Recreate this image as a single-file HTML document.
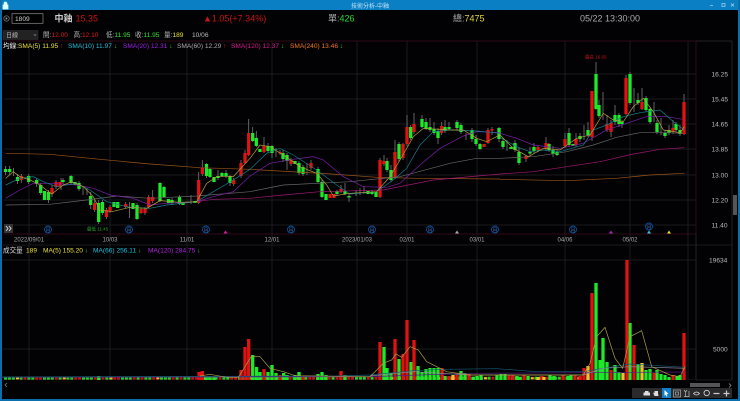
<!DOCTYPE html>
<html lang="zh-Hant"><head><meta charset="utf-8"><title>技術分析-中釉</title>
<style>
html,body{margin:0;padding:0;background:#000;width:740px;height:401px;overflow:hidden}
svg{display:block;filter:blur(.35px)}
text{font-family:"Liberation Sans","Noto Sans CJK TC",sans-serif;font-size:6.6px}
.l{fill:none;stroke-width:.7}
.l path,.l polyline{fill:none;vector-effect:non-scaling-stroke}
</style></head><body>
<svg width="740" height="401" viewBox="0 0 740 401" xmlns="http://www.w3.org/2000/svg">
<rect width="740" height="401" fill="#020204"/>
<rect width="740" height="10" fill="#0b7fc4"/>
<rect y="0" width="2" height="401" fill="#0b6fae"/>
<rect x="738" y="0" width="2" height="401" fill="#0b6fae"/>
<rect y="399" width="740" height="2" fill="#0b6fae"/>
<!-- title bar -->
<path d="M3 5h5v4H3zM4 5V3.500a1.500 1.500 0 0 1 3 0V5" fill="#dff" stroke="#dff" stroke-width=".7"/>
<text x="370" y="7.800" text-anchor="middle" fill="#bfe2f5" style="font-size:6px">技術分析-中釉</text>
<path d="M710 5.500h3M722 3.500h3v3h-3zM731 3.500l3 3m0-3l-3 3" stroke="#9fd0ec" stroke-width=".8" fill="none"/>
<!-- header -->
<circle cx="6.500" cy="18.500" r="2.700" fill="none" stroke="#999" stroke-width=".6"/><path d="M5.700 17v3l2-1.500z" fill="#999"/>
<rect x="12" y="13.700" width="31" height="9.600" fill="#000" stroke="#8a8a8a" stroke-width=".7"/>
<text x="15" y="21" fill="#ccc" style="font-size:6.600px">1809</text>
<text x="54.500" y="21.500" fill="#ccc" style="font-size:9px;font-weight:bold">中釉</text>
<text x="75.500" y="21.500" fill="#c81414" style="font-size:9px">15.35</text>
<text x="203" y="21.500" fill="#c81414" style="font-size:9px">▲1.05(+7.34%)</text>
<text x="328" y="21.500" fill="#aaa" style="font-size:9px">單:<tspan fill="#2cd82c">426</tspan></text>
<text x="453" y="21.500" fill="#aaa" style="font-size:9px">總:<tspan fill="#e0d830">7475</tspan></text>
<text x="580" y="21.500" fill="#aaa" style="font-size:9px">05/22 13:30:00</text>
<rect x="3" y="30.500" width="35" height="9" fill="#222" stroke="#333" stroke-width=".5"/>
<text x="6" y="37.500" fill="#bbb" style="font-size:6px">日線</text>
<path d="M33.500 34.500l1.500 1.500 1.500-1.500z" fill="#888"/>
<text x="43" y="37.200" fill="#bbb">開:<tspan fill="#e01818">12.00</tspan></text>
<text x="73.500" y="37.200" fill="#bbb">高:<tspan fill="#e01818">12.10</tspan></text>
<text x="106" y="37.200" fill="#bbb">低:<tspan fill="#30e030">11.95</tspan></text>
<text x="135" y="37.200" fill="#bbb">收:<tspan fill="#30e030">11.95</tspan></text>
<text x="164" y="37.200" fill="#bbb">量:<tspan fill="#e8e030">189</tspan></text>
<text x="192" y="37.200" fill="#bbb">10/06</text>
<!-- grid -->
<g stroke="#222226" stroke-width=".8" fill="none">
<path d="M4 74H696M4 99H696M4 124H696M4 149H696M4 175H696M4 200H696M4 225H696"/>
<path d="M29 41V380M110 41V380M187 41V380M272 41V380M357 41V380M407 41V380M477 41V380M565 41V380M630 41V380M688 41V380"/>
<path d="M3 245H732M3 260H696M3 349H696M3 380H732"/>
<path d="M732 41V380" stroke="#2c2c30"/>
</g>
<path d="M3 41H696M3 234H696M696 41V234" stroke="#3c0e1a" stroke-width=".8" fill="none"/>
<path d="M696 41H732M696 234V380" stroke="#2c2c30" stroke-width=".8" fill="none"/>
<!-- legend -->
<text x="3" y="48" fill="#eee">均線:<tspan fill="#e8e030">SMA(5) 11.95 </tspan><tspan fill="#e02020">↑</tspan></text>
<text x="68" y="48" fill="#18c0d8">SMA(10) 11.97 <tspan fill="#28c828">↓</tspan></text>
<text x="123" y="48" fill="#9a20e0">SMA(20) 12.31 <tspan fill="#28c828">↓</tspan></text>
<text x="177" y="48" fill="#aaa">SMA(60) 12.29 <tspan fill="#e02020">↑</tspan></text>
<text x="231" y="48" fill="#d81890">SMA(120) 12.37 <tspan fill="#28c828">↓</tspan></text>
<text x="290" y="48" fill="#f07818">SMA(240) 13.46 <tspan fill="#28c828">↓</tspan></text>
<!-- right scale -->
<g fill="#bbb">
<text x="711.500" y="76.500">16.25</text><text x="711.500" y="101.500">15.45</text><text x="711.500" y="126.500">14.65</text><text x="711.500" y="151.500">13.85</text><text x="711.500" y="177.500">13.00</text><text x="711.500" y="202.500">12.20</text><text x="711.500" y="227.500">11.40</text>
<text x="709" y="262.500">19634</text><text x="713" y="351.500">5000</text>
</g>
<rect x="733" y="195" width="4" height="20" fill="#555"/>
<!-- date labels -->
<g fill="#aaa" text-anchor="middle">
<text x="29" y="241.500" style="font-size:6px">2022/09/01</text><text x="110" y="241.500" style="font-size:6px">10/03</text><text x="187" y="241.500" style="font-size:6px">11/01</text><text x="272" y="241.500" style="font-size:6px">12/01</text><text x="357" y="241.500" style="font-size:6px">2023/01/03</text><text x="407" y="241.500" style="font-size:6px">02/01</text><text x="477" y="241.500" style="font-size:6px">03/01</text><text x="565" y="241.500" style="font-size:6px">04/06</text><text x="630" y="241.500" style="font-size:6px">05/02</text>
</g>
<!-- wicks -->
<path stroke="#7a7a7a" stroke-width=".8" fill="none" d="M5.500 166V175M9.700 166V175M13.500 168V176M17.500 174V184M21.300 174V183M28.700 174V184M36.700 178V187M40.700 183V195M48.500 190V203M52 185V197M56 180V189M61 178V190M63 178V184M71 175V185M79 181V191M83 186V195M87 188V195M90.700 192V209M94.700 200V212M98.700 200V224M102.500 200V215M106.500 208V219M110 205V213M125.700 202V208M129.500 202V218M137 203V220M141 208V214M145 207V215M148.700 195V208M152.700 190V203M160 182V202M164 186V198M172 198V205M179.500 195V205M191 195V204M198.700 172V204M202.300 160V176M206.500 163V178M210 168V178M218 170V180M222 172V177M226 170V178M230 175V186M233.700 178V186M241 160V178M245 150V164M248.700 119V156M252.700 127V142M256.300 131V147M264 137V153M268 143V153M272 145V158M276 148V157M280 150V155M283 150V162M287 153V170M291 158V166M299 161V175M303 165V176M307 163V175M311 160V170M318 167V183M322 180V198M337 190V196M341 185V193M345 183V195M349 194V202M356 190V196M360 188V195M364 186V194M372 190V195M380 158V198M384 155V166M387 158V172M391 165V182M395 140V179M399 142V162M403 143V160M407 115V146M410.700 125V140M414 113V134M422 115V128M426 118V130M430 118V132M434 122V135M438 128V144M441.700 122V135M445 120V133M449 122V130M457 120V130M461 123V134M466 133V140M472 128V142M476 135V146M480 143V150M488 128V144M492 127V135M499 127V142M503 138V149M507 140V151M515 140V152M519 148V165M526 155V162M530 147V155M534 143V153M538 146V152M546 137V151M549 143V152M553 146V157M557 150V156M565 133V148M569 128V147M576 133V147M580 133V142M584 125V140M588 122V137M592 91V141M596 62V110M599 100V118M603 92V120M607 115V132M611 120V137M615 105V125M619 113V127M622 120V128M626 75V115M630 72V105M634 88V112M638 93V105M642 88V110M646 96V112M650 107V124M654 102V122M657 120V134M661 118V135M665 130V138M669 125V135M673 120V134M676 122V132M680 125V136M684 94V135"/>
<!-- green candles -->
<path stroke="#1ee82a" stroke-width="3.300" fill="none" d="M5.500 169V172M9.700 169V172M17.500 177V181M28.700 176V182M36.700 180V184M40.700 185V193M44.500 191V200M48.500 192V200M63 180V182M71 176V183M75 182V185M79 183V189M90.700 196V205M98.700 203V222M102.500 202V213M114 202V207M117.700 202V208M133 203V209M137 205V219M160 183V201M164 187V197M168.500 199V203M172 200V203M179.500 197V204M183 202V205M195 201V203M206.500 164V176M210 169V177M214 177V182M218 176V178M222 173V176M226 173V176M230 176V183M252.700 133V141M256.300 138V146M260 149V152M268 146V151M272 146V153M283 153V159M287 155V161M295 161V164M299 163V173M303 167V174M318 169V182M322 182V197M326 194V200M337 191V194M345 191V194M349 196V197.500M368 191V194M372 192V194M376 192V197M387 161V170M391 170V180M399 144V159M410.700 127V138M422 119V127M426 122V129M430 127V130M434 129V133M438 131V138M445 127V131M449 127V129M457 122V128M461 125V132M472 130V139M476 139V144M480 144V149M499 128V139M503 141V147M511 147V149M515 143V150M519 152V163M530 152V153.500M534 147V151M549 144V150M553 150V154M557 152V155M569 133V145M573 144V146M580 136V139M588 130V135M596 74V109M599 105V116M615 115V122M619 115V124M622 122V124M630 74V103M638 100V103M646 98V110M650 109V122M657 123V132M665 133V136M669 130V133M676 124V130M680 130V134"/>
<!-- red candles -->
<path stroke="#e01212" stroke-width="3.300" fill="none" d="M21.300 176V180M52 188V194M56 182V187M60 182V187M94.700 203V210M106.500 210V217M110 207V211M125.700 204V207M141 209V213M145 209V213M148.700 197V207M152.700 197V201M198.700 180V203M202.300 168V174M233.700 180V184M241 163V176M245 153V163M248.700 133V155M264 146V152M280 152V153.500M291 160V164M311 163V168M330 194V198M334 194V198M341 189V192M380 160V197M384 161V164M395 152V178M403 144V158M407 127V144M414 124V132M441.700 126V133M484 144V147M488 130V143M492 129V130.500M526 156V159M538 147V150M546 143V149M565 139V146M576 139V145M592 91V137M607 124V130M611 123V132M626 78V114M642 102V109M673 128V132M684 102V134"/>
<!-- peak labels -->
<text x="585" y="58.500" fill="#c01414" style="font-size:4.500px">最高 16.65</text>
<text x="87" y="230.500" fill="#22a822" style="font-size:4.500px">最低 11.45</text>
<!-- price MAs : zoom coords -->
<g class="l">
<g transform="translate(0,70) scale(.33333)">
<polyline stroke="#9c5418" points="17,250 150,253 300,268 450,282 600,293 750,298 996,312 1130,322 1250,325 1500,327"/>
<polyline stroke="#a01870" points="540,400 590,395 640,388 750,385 850,375 960,365 1150,360 1300,330 1500,312"/>
<polyline stroke="#666" points="17,405 150,403 260,390 350,378 450,385 590,378 750,365 850,345 1050,335 1200,320 1350,280 1430,265 1500,265"/>
<polyline stroke="#7a1fa8" points="17,385 60,360 100,340 150,340 230,345 280,355 330,375 400,385 450,405 500,400 590,395 640,380 700,365 750,318 810,280 880,268 940,260 970,270 1030,320 1090,350 1160,352 1200,340 1260,285 1320,235 1390,198 1430,185 1500,188"/>
<polyline stroke="#157f90" points="17,345 60,325 100,320 130,335 170,350 230,340 270,360 320,395 390,412 450,415 500,405 590,395 640,365 700,330 750,298 800,250 840,235 880,255 950,300 1010,345 1050,372 1130,365 1180,330 1220,295 1260,225 1300,185 1350,180 1430,183 1500,190"/>
<polyline stroke="#b8a040" points="17,325 40,305 60,320 90,330 120,345 155,372 190,345 215,335 250,350 280,380 300,420 335,425 390,412 440,415 480,392 540,397 590,395 620,340 650,320 700,320 750,265 780,225 810,230 850,255 900,290 950,310 980,345 1000,378 1050,370 1130,365 1170,320 1200,270 1240,200 1270,175 1350,180 1390,180 1430,205 1460,215 1500,195"/>
</g>
<g transform="translate(500,50) scale(.33333)">
<polyline stroke="#9c5418" points="0,388 200,392 350,385 450,375 553,370"/>
<polyline stroke="#a01870" points="0,372 100,365 200,350 300,335 400,312 480,298 553,293"/>
<polyline stroke="#666" points="0,325 100,320 200,305 280,285 350,262 420,248 500,248 548,250"/>
<polyline stroke="#7a1fa8" points="0,250 50,265 100,285 180,295 250,280 320,240 380,220 440,200 500,200 548,208"/>
<polyline stroke="#157f90" points="0,262 50,290 90,305 130,300 180,305 250,285 280,240 320,225 370,200 420,188 480,180 520,215 553,240"/>
<polyline stroke="#b8a040" points="0,255 40,295 85,320 130,295 180,300 230,265 270,255 310,190 340,210 370,215 400,170 430,145 460,185 490,240 540,248 553,230"/>
</g>
</g>
<!-- month markers -->
<g fill="none" stroke="#0d4f9c" stroke-width=".9">
<circle cx="48" cy="229.500" r="3.500"/><circle cx="129" cy="229.500" r="3.500"/><circle cx="206" cy="229.500" r="3.500"/><circle cx="291" cy="229.500" r="3.500"/><circle cx="372" cy="229.500" r="3.500"/><circle cx="430" cy="229.500" r="3.500"/><circle cx="495" cy="229.500" r="3.500"/><circle cx="573" cy="229.500" r="3.500"/><circle cx="649" cy="226.500" r="3.500"/>
</g>
<g fill="#2c78c8" text-anchor="middle">
<text x="48" y="232" style="font-size:5px">月</text><text x="129" y="232" style="font-size:5px">月</text><text x="206" y="232" style="font-size:5px">月</text><text x="291" y="232" style="font-size:5px">月</text><text x="372" y="232" style="font-size:5px">月</text><text x="430" y="232" style="font-size:5px">月</text><text x="495" y="232" style="font-size:5px">月</text><text x="573" y="232" style="font-size:5px">月</text><text x="649" y="229" style="font-size:5px">月</text>
</g>
<path d="M223.500 233.500l2-3 2 3z" fill="#d820a0"/>
<path d="M455 233.500l2-3 2 3z" fill="#aaa"/>
<path d="M609 233.500l2-3 2 3z" fill="#b020c8"/>
<path d="M647 233.500l2-3 2 3z" fill="#30c8e8"/>
<path d="M667 233.500l2-3 2 3z" fill="#e8e030"/>
<rect x="4" y="224" width="9" height="9" fill="#333"/>
<path d="M6 226l2 2.500-2 2.500M9 226l2 2.500-2 2.500" stroke="#ddd" stroke-width=".9" fill="none"/>
<!-- volume legend -->
<text x="3" y="252.500" fill="#ddd">成交量</text>
<text x="26" y="252.500" fill="#e8e030">189</text>
<text x="43" y="252.500" fill="#e8e030">MA(5) 155.20 <tspan fill="#28c828">↓</tspan></text>
<text x="93" y="252.500" fill="#18c0d8">MA(66) 256.11 <tspan fill="#28c828">↓</tspan></text>
<text x="148" y="252.500" fill="#b020e0">MA(120) 284.75 <tspan fill="#28c828">↓</tspan></text>
<!-- volume base -->
<path d="M4 378.200H582" stroke="#c81212" stroke-width="2.800" stroke-dasharray="3 .9" fill="none"/>
<path d="M4 378.200H582" stroke="#1ed02a" stroke-width="2.800" stroke-dasharray="3 .9 3 .9 3 4.800 3 4.800 3 .9 3 8.700" fill="none"/>
<path d="M4 378.200H582" stroke="#e8c030" stroke-width="2" stroke-dasharray="3 43.800" stroke-dashoffset="-12" fill="none"/>
<rect x="4" y="380" width="692" height="1" fill="#020204"/>
<!-- volume green -->
<path stroke="#1ee82a" stroke-width="3.300" fill="none" d="M98.700 380V376M206 380V376M210 380V376M214 380V377M252.700 380V355M256.600 380V367M260 380V372M268 380V372M272 380V365M276 380V373M283.700 380V373M287 380V375M295 380V375M299 380V372M318 380V374M322 380V372M326 380V375M345 380V375M384 380V347M387 380V368M391 380V373M399 380V359M411 380V362M418 380V366M422 380V372M426 380V369M430 380V368M434 380V368M438 380V368M445 380V376M461 380V371M465 380V373M473 380V377M477 380V376M481 380V375M497 380V375M501 380V374M505 380V374M517 380V376M520 380V377M528 380V376M550 380V375M554 380V376M568 380V376M571 380V375M588 380V376M596 380V283M600 380V360M603 380V338M607 380V362M615 380V365M619 380V372M630 380V323M638 380V364M646 380V370M650 380V369M657 380V370M661 380V374M665 380V375M669 380V377M677 380V376M680 380V375"/>
<!-- volume red -->
<path stroke="#e01212" stroke-width="3.300" fill="none" d="M199 380V372M202.300 380V371M241 380V370M245 380V347M248.700 380V339M264 380V369M280 380V375M303 380V376M341 380V371M380 380V342M395 380V339M403 380V354M407 380V320M414 380V340M442 380V368M449 380V376M457 380V375M469 380V374M509 380V375M513 380V375M524 380V375M542 380V376M563 380V375M575 380V375M580 380V376M584 380V368M592 380V293M611 380V370M627 380V260M634 380V345M654 380V373M673 380V375M684 380V333"/>
<path stroke="#f0c030" stroke-width="3.300" fill="none" d="M453 380V375M544 380V377M538 380V377M588 380V366M623 380V373M642 380V363"/>
<!-- volume MAs -->
<g class="l"><g transform="translate(370,240) scale(.33333)">
<polyline stroke="#5a1a88" points="-1110,412 0,410 300,400 640,398 945,396"/>
<polyline stroke="#145a78" points="-1110,411 -100,408 0,405 130,392 220,388 380,386 500,395 640,395 780,372 945,382"/>
<polyline stroke="#8a8aa0" points="0,408 130,395 300,405 640,405 700,385 780,380 945,385"/>
<polyline stroke="#a8a040" points="-510,408 -480,403 -430,412 -395,412 -375,380 -355,348 -330,350 -300,385 -260,395 -225,407 0,410 25,385 40,370 65,360 78,342 95,352 120,320 145,330 170,365 190,375 230,395 300,405 640,405 660,370 680,290 705,262 735,355 758,385 780,290 815,272 845,380 900,405 930,410 945,380"/>
</g></g>
<!-- bottom scrollbar -->
<path d="M7 383l-2 2 2 2" stroke="#888" stroke-width=".7" fill="none"/>
<rect x="690" y="383" width="30" height="4" fill="#555"/>
<path d="M729 383.500l2 2-2 2" stroke="#999" stroke-width=".7" fill="none"/>
<!-- toolbar -->
<rect x="632" y="388" width="100" height="10" fill="#2a2a2c"/>
<rect x="662" y="388" width="9" height="10" fill="#1280c8"/>
<path d="M645 391h3.500v1.500h1.500v3h-6.500v-3H645z" fill="#ddd"/>
<path d="M654.500 396l-1.500-3.500 1.500.5v-2h3.500v2.500l.5 2.500z" fill="#ddd"/>
<path d="M664.500 390l4 4-2 .2 1 2-1 .4-1-2-1 1.400z" fill="#fff"/>
<path d="M673.500 390h7v7h-7zM675.500 392h3v3h-3z" fill="none" stroke="#aaa" stroke-width=".7"/>
<path d="M684 390l1.500 2 1.500-2M685.500 392v4.500M684 396.500h5.500M689 391v5" fill="none" stroke="#bbb" stroke-width=".7"/>
<path d="M693.500 393.500q3-3 6 0q-3 3-6 0z" fill="none" stroke="#ddd" stroke-width=".8"/>
<circle cx="706.700" cy="393" r="2.700" fill="none" stroke="#ddd" stroke-width=".8"/>
<path d="M713.500 393.500h6M723.500 393.500h6M726.500 390.500v6" stroke="#ccc" stroke-width="1.200" fill="none"/>
</svg>
</body></html>
